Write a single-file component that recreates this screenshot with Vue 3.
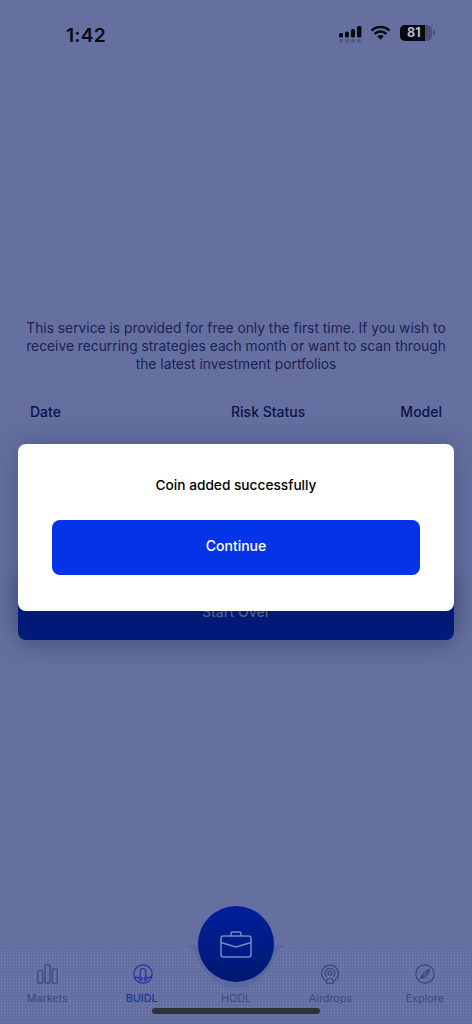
<script setup>
const tabs = [
  { label: 'Markets', icon: 'bars' },
  { label: 'BUIDL', icon: 'buidl', active: true },
  { label: 'HODL', icon: 'none' },
  { label: 'Airdrops', icon: 'airdrop' },
  { label: 'Explore', icon: 'compass' },
]
</script>

<template>
  <div class="page">
    <header class="status">
      <span class="time">1:42</span>
      <div class="status-icons">
        <svg width="24" height="17" viewBox="0 0 24 17" class="signal">
          <rect x="0" y="7" width="4" height="4.5" rx="1.5" fill="#0a0a14" />
          <rect x="6" y="5.5" width="4" height="6" rx="1.5" fill="#0a0a14" />
          <rect x="12" y="3" width="4" height="8.5" rx="1.5" fill="#0a0a14" />
          <rect x="18" y="0" width="4.5" height="11.5" rx="1.5" fill="#0a0a14" />
          <g fill="#0a0a14" opacity="0.22">
            <rect x="0" y="13" width="4" height="3.5" rx="1" />
            <rect x="6" y="13" width="4" height="3.5" rx="1" />
            <rect x="12" y="13" width="4" height="3.5" rx="1" />
            <rect x="18" y="13" width="4" height="3.5" rx="1" />
          </g>
        </svg>
        <svg width="21" height="16" viewBox="0 0 21 16" class="wifi">
          <path d="M1.5 5.6a13 13 0 0 1 18 0M4.6 8.9a8.6 8.6 0 0 1 11.8 0" fill="none" stroke="#0a0a14" stroke-width="2.5" />
          <path d="M7.3 11.3a4.6 4.6 0 0 1 6.4 0l-3.2 3.5z" fill="#0a0a14" />
        </svg>
        <div class="battery">
          <div class="battery-fill"><span>81</span></div>
          <i class="battery-cap"></i>
        </div>
      </div>
    </header>

    <main class="content">
      <p class="intro">
        This service is provided for free only the first time. If you wish to
        receive recurring strategies each month or want to scan through
        the latest investment portfolios
      </p>
      <div class="table-head">
        <span>Date</span>
        <span class="risk">Risk Status</span>
        <span>Model</span>
      </div>
      <button class="start-over">Start Over</button>
    </main>

    <nav class="tabbar">
      <div
        v-for="tab in tabs"
        :key="tab.label"
        class="tab"
        :class="{ active: tab.active }"
      >
        <svg v-if="tab.icon === 'bars'" class="icon-bars" width="21" height="20" viewBox="0 0 21 20" fill="none" stroke="currentColor" stroke-width="1.2">
          <rect x="0.8" y="6.500" width="5" height="12.700" rx="1.200" />
          <rect x="8" y="0.800" width="5" height="18.400" rx="1.200" />
          <rect x="15.200" y="5" width="5" height="14.200" rx="1.200" />
        </svg>
        <svg v-else-if="tab.icon === 'buidl'" class="icon-buidl" width="20" height="20" viewBox="0 0 20 20" fill="none" stroke="currentColor" stroke-width="1.200">
          <circle cx="10" cy="10" r="9.200" />
          <path d="M7.200 13V8a2.800 3.500 0 0 1 5.600 0v5" />
          <path d="M1.200 12.800c3 .1 5 .8 6 2.800M18.800 12.800c-3 .1-5 .8-6 2.800M7.200 13c-.9 1.600-.8 2.800.6 3.800 1.300-1 1.400-2.200.6-3.800M12.800 13c.9 1.600.8 2.800-.6 3.800-1.300-1-1.400-2.200-.6-3.800" />
        </svg>
        <svg v-else-if="tab.icon === 'airdrop'" width="18" height="20" viewBox="0 0 18 20" fill="none" stroke="currentColor" stroke-width="1.200">
          <path d="M4.800 16.800a8.400 8.400 0 1 1 8.400 0" />
          <path d="M5.800 12.800a4.800 4.800 0 1 1 6.400 0" />
          <circle cx="9" cy="9.200" r="1.900" />
          <path d="M5.500 19.300V18a3.500 3.500 0 0 1 7 0v1.300z" />
        </svg>
        <svg v-else-if="tab.icon === 'compass'" class="icon-compass" width="20" height="20" viewBox="0 0 20 20" fill="none" stroke="currentColor" stroke-width="1.200">
          <circle cx="10" cy="10" r="9.200" />
          <path d="M14.400 5.600c-.2 3.600-2.400 7-8.800 8.800 1.200-4.200 3.800-7.600 8.800-8.800zM5.600 14.400l8.800-8.800" />
        </svg>
        <span v-else class="icon-gap"></span>
        <span class="tab-label">{{ tab.label }}</span>
      </div>
    </nav>

    <!-- notch around the button, cut into the textured bar -->
    <svg class="fab-notch" width="106" height="44" viewBox="0 0 106 44">
      <path d="M0 0Q10 1 14 10C19 30 37 43 53 43C69 43 87 30 92 10Q96 1 106 0Z" fill="#5c68a1" />
    </svg>

    <div class="fab">
      <svg width="32" height="27" viewBox="0 0 32 27" fill="none" stroke="#7886c2" stroke-width="1.500" stroke-linejoin="round">
        <rect x="1" y="5" width="30" height="21" rx="2.500" />
        <path d="M11 5V2.500A1.500 1.500 0 0 1 12.500 1h7A1.500 1.500 0 0 1 21 2.500V5" />
        <path d="M1 11.500L16 16l15-4.500" />
      </svg>
    </div>

    <div class="home-indicator"></div>

    <!-- success dialog -->
    <div class="dialog">
      <p class="dialog-title">Coin added successfully</p>
      <button class="dialog-btn">Continue</button>
    </div>
  </div>
</template>

<style scoped>
.page {
  position: relative;
  width: 472px;
  height: 1024px;
  overflow: hidden;
  display: flex;
  flex-direction: column;
  background: #6570a1;
  font-family: Inter, 'Noto Sans', sans-serif;
}

.status {
  height: 60px;
  padding: 0 37px 0 66px;
  display: flex;
  align-items: center;
  justify-content: space-between;
  box-sizing: border-box;
  color: #0a0a14;
}

.time {
  font-size: 19.300px;
  font-weight: 600;
  letter-spacing: 0.2px;
  margin-top: 10px;
}

.status-icons {
  display: flex;
  align-items: flex-start;
  gap: 9px;
  margin-top: 8px;
}

.signal {
  margin-right: -2px;
}

.wifi {
  margin-top: -1px;
}

.battery {
  display: flex;
  align-items: center;
  margin-top: -1px;
}

.battery-fill {
  width: 32px;
  height: 16px;
  border-radius: 5px;
  background: linear-gradient(90deg, #07070f 78%, #4a5178 78%);
  color: #b9bdd4;
  font-size: 12.500px;
  font-weight: 700;
  line-height: 16px;
  padding-left: 7px;
  box-sizing: border-box;
}

.battery-cap {
  width: 2px;
  height: 5px;
  margin-left: 1px;
  border-radius: 0 2px 2px 0;
  background: #4a5178;
}

.content {
  flex: 1;
  padding: 259px 18px 0;
  display: flex;
  flex-direction: column;
  min-height: 0;
}

.intro {
  margin: 0;
  text-align: center;
  font-size: 13.800px;
  line-height: 18px;
  color: #1b2150;
}

.table-head {
  margin-top: 30px;
  padding: 0 12px;
  display: flex;
  justify-content: space-between;
  font-size: 14px;
  font-weight: 500;
  line-height: 18px;
  color: #0b1347;
}

.risk {
  margin-left: 75px;
}

.start-over {
  margin-top: 155px;
  height: 64px;
  width: 100%;
  padding: 6px 0 0;
  border: 0;
  border-radius: 8px;
  background: #001b7a;
  color: #5c6795;
  font: 500 14px Inter, sans-serif;
  box-shadow: 0 4px 24px rgba(20, 26, 70, 0.4);
}

.tabbar {
  height: 79px;
  display: flex;
  padding-top: 19px;
  box-sizing: border-box;
  background-color: #636ea1;
  background-image: radial-gradient(rgba(130, 142, 190, 0.6) 0.5px, transparent 0.7px);
  background-size: 3px 3px;
}

.tab {
  flex: 1;
  display: flex;
  flex-direction: column;
  align-items: center;
  color: #3c4580;
}

.tab.active {
  color: #1e339f;
}

.icon-bars {
  margin-left: 1px;
}

.icon-buidl {
  margin-left: 2px;
}

.icon-compass {
  margin-left: 1px;
}

.icon-gap {
  height: 20px;
}

.tab-label {
  margin-top: 8px;
  font-size: 10.800px;
  font-weight: 400;
  line-height: 14px;
}

.tab.active .tab-label {
  font-weight: 500;
}

.fab-notch {
  position: absolute;
  left: 183px;
  top: 945px;
}

.fab {
  position: absolute;
  left: 198px;
  top: 906px;
  width: 76px;
  height: 76px;
  border-radius: 50%;
  display: flex;
  align-items: center;
  justify-content: center;
  background: linear-gradient(180deg, #001f9c, #001970);
}

.home-indicator {
  position: absolute;
  left: 152px;
  top: 1008px;
  width: 168px;
  height: 6px;
  border-radius: 3px;
  background: #2f3138;
}

.dialog {
  position: absolute;
  left: 18px;
  top: 444px;
  width: 436px;
  height: 167px;
  box-sizing: border-box;
  padding: 32px 34px 0;
  border-radius: 8px;
  background: #fff;
  box-shadow: 0 0 28px rgba(20, 26, 70, 0.3);
}

.dialog-title {
  margin: 0;
  text-align: center;
  font-size: 13.700px;
  font-weight: 500;
  line-height: 18px;
  color: #000;
}

.dialog-btn {
  display: block;
  margin-top: 26px;
  width: 100%;
  height: 55px;
  padding: 0 0 4px;
  border: 0;
  border-radius: 8px;
  background: #0433e8;
  color: #fff;
  font: 500 14px Inter, sans-serif;
}
</style>
